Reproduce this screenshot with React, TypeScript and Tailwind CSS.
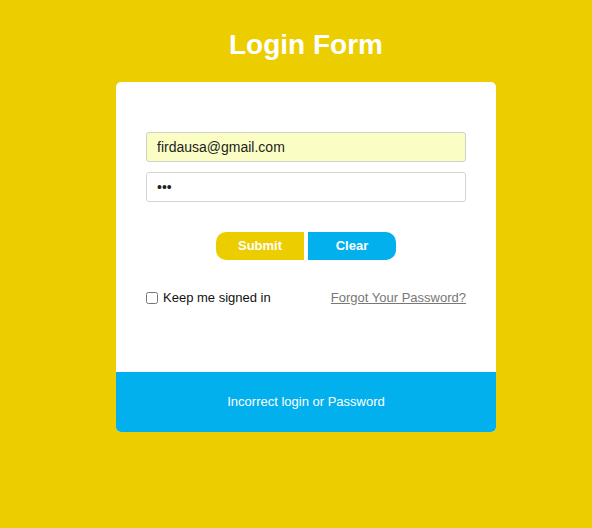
const App = () => {
  return (
    <div className="min-h-screen w-full bg-[#ebcd00] font-['Liberation_Sans',Arial,sans-serif]">
      <div className="flex flex-col items-center pt-[29px] pl-[20px]">
        <h1 className="text-[28px] leading-[32px] font-bold text-white">Login Form</h1>

        <div className="mt-[21px] w-[380px] rounded-[5px] bg-white overflow-hidden">
          <form className="px-[30px] pt-[50px] pb-[64px]">
            <input
              type="text"
              defaultValue="firdausa@gmail.com"
              className="block w-[320px] h-[30px] rounded-[3px] border border-[#d0d0c8] bg-[#fafec4] px-[10px] text-[14px] text-[#222] outline-none"
            />
            <input
              type="password"
              defaultValue="abc"
              className="mt-[10px] block w-[320px] h-[30px] rounded-[3px] border border-[#d3d3d3] bg-white px-[10px] text-[14px] text-[#222] outline-none"
            />

            <div className="mt-[30px] flex justify-center gap-[4px]">
              <button
                type="button"
                className="w-[88px] h-[28px] rounded-l-[10px] bg-[#ebcd00] text-[13px] font-bold text-white"
              >
                Submit
              </button>
              <button
                type="button"
                className="w-[88px] h-[28px] rounded-r-[10px] bg-[#03b0ee] text-[13px] font-bold text-white"
              >
                Clear
              </button>
            </div>

            <div className="mt-[28px] flex items-center justify-between text-[13px]">
              <label className="flex items-center gap-[5px] text-[#111]">
                <input type="checkbox" className="m-0 h-[12px] w-[12px]" />
                Keep me signed in
              </label>
              <a href="#" className="text-[#777] underline">
                Forgot Your Password?
              </a>
            </div>
          </form>

          <div className="flex h-[60px] items-center justify-center bg-[#03b0ee] text-[13px] text-white">
            Incorrect login or Password
          </div>
        </div>
      </div>
    </div>
  );
};

export default App;
